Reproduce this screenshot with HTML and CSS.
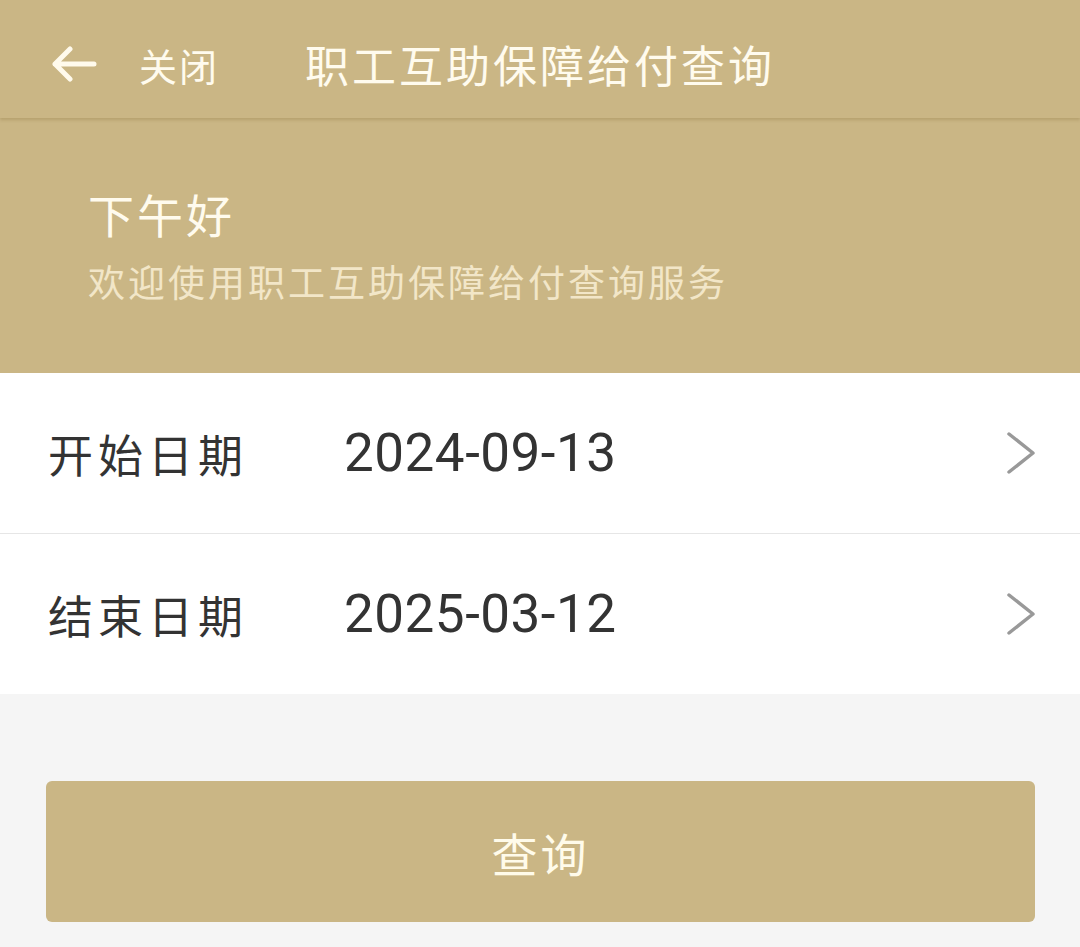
FILE: index.html
```html
<!DOCTYPE html>
<html>
<head>
    <meta charset="utf-8">
    <title>职工互助保障给付查询</title>
    <link rel="stylesheet" href="styles.css">
</head>
<body>
    <div class="topbar">
        <svg class="back" width="46" height="36" viewBox="0 0 46 36">
            <path d="M43 18H4M19 3L4 18l15 15" fill="none" stroke="#fffaec" stroke-width="5" stroke-linecap="round" stroke-linejoin="round"/>
        </svg>
        <span class="close">关闭</span>
        <span class="title">职工互助保障给付查询</span>
    </div>

    <div class="greeting">
        <h1>下午好</h1>
        <p>欢迎使用职工互助保障给付查询服务</p>
    </div>

    <div class="form">
        <div class="row">
            <span class="label">开始日期</span>
            <span class="value">2024-09-13</span>
            <svg class="chevron" width="30" height="44" viewBox="0 0 30 44">
                <path d="M3 3l24 19L3 41" fill="none" stroke="#999" stroke-width="3.5" stroke-linecap="round" stroke-linejoin="round"/>
            </svg>
        </div>
        <div class="row">
            <span class="label">结束日期</span>
            <span class="value">2025-03-12</span>
            <svg class="chevron" width="30" height="44" viewBox="0 0 30 44">
                <path d="M3 3l24 19L3 41" fill="none" stroke="#999" stroke-width="3.5" stroke-linecap="round" stroke-linejoin="round"/>
            </svg>
        </div>
    </div>

    <div class="actions">
        <button class="query">查询</button>
    </div>
</body>
</html>
```

FILE: styles.css
```css
body {
    margin: 0;
    background-color: #f5f5f5;
    font-family: "Noto Sans CJK SC", "Noto Sans", sans-serif;
}

.topbar {
    display: flex;
    align-items: center;
    height: 118px;
    padding: 10px 0 0 51px;
    background-color: #cab685;
    box-shadow: 0 2px 3px rgba(120, 95, 40, 0.25);
    position: relative;
    z-index: 1;
    color: #fffbee;
    box-sizing: border-box;
}

.back {
    display: block;
}

.close {
    margin-left: 42px;
    font-size: 38px;
    letter-spacing: 2px;
}

.title {
    margin-left: 86px;
    font-size: 44px;
    letter-spacing: 3px;
}

.greeting {
    height: 255px;
    background-color: #cab685;
    padding: 62px 0 0 88px;
    box-sizing: border-box;
}

.greeting h1 {
    margin: 0;
    font-size: 46px;
    font-weight: normal;
    line-height: 66px;
    letter-spacing: 3px;
    color: #fffbee;
}

.greeting p {
    margin: 9px 0 0;
    font-size: 37px;
    line-height: 52px;
    letter-spacing: 3px;
    color: #f2e6c8;
}

.form {
    background-color: #fff;
}

.row {
    display: flex;
    align-items: center;
    height: 160px;
    padding: 0 44px 0 48px;
}

.row + .row {
    border-top: 1px solid #e6e6e6;
}

.label {
    width: 296px;
    font-size: 45px;
    letter-spacing: 5px;
    color: #333;
}

.value {
    flex: 1;
    font-family: "Roboto", "Noto Sans CJK SC", sans-serif;
    font-size: 53px;
    letter-spacing: 0.5px;
    color: #333;
}

.chevron {
    display: block;
}

.actions {
    padding: 87px 45px 24px 46px;
}

.query {
    display: block;
    width: 100%;
    height: 141px;
    border: none;
    border-radius: 6px;
    background-color: #cab685;
    color: #fffbea;
    font-family: "Noto Sans CJK SC", sans-serif;
    font-size: 46px;
    letter-spacing: 3px;
    cursor: pointer;
}
```
